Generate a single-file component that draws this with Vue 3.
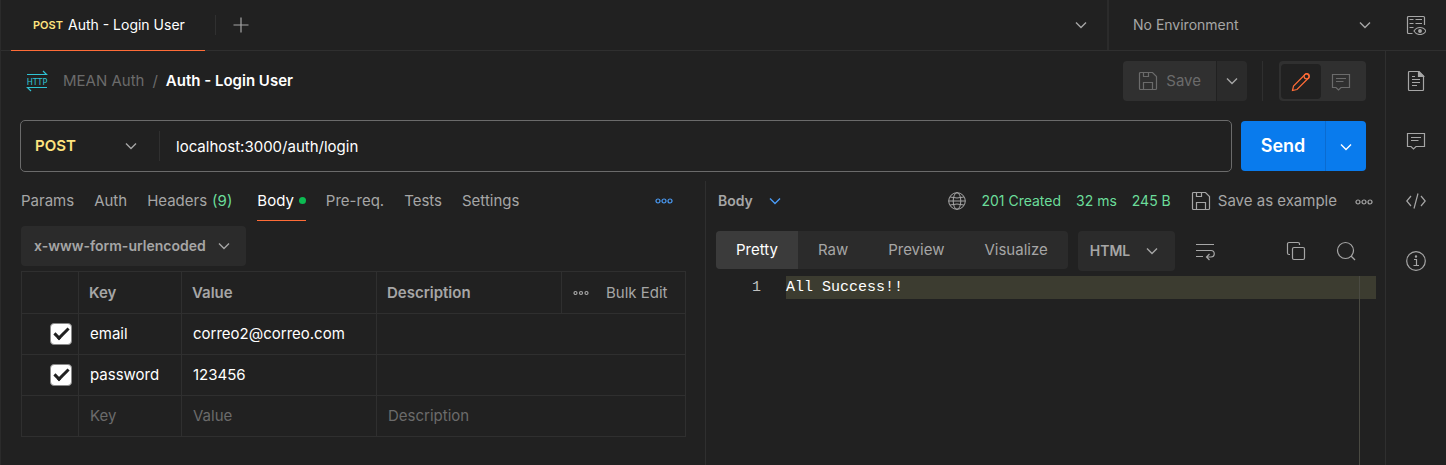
<script setup>
import { ref } from 'vue'

const requestTabs = [
  { label: 'Params' },
  { label: 'Auth' },
  { label: 'Headers', count: '(9)' },
  { label: 'Body', active: true },
  { label: 'Pre-req.' },
  { label: 'Tests' },
  { label: 'Settings' },
]
const views = ['Pretty', 'Raw', 'Preview', 'Visualize']
const activeView = ref('Pretty')
const url = ref('localhost:3000/auth/login')
const rows = ref([
  { key: 'email', value: 'correo2@correo.com', on: true },
  { key: 'password', value: '123456', on: true },
])
</script>

<template>
  <div class="app">
    <header class="topbar">
      <button class="tab" type="button">
        <span class="tab-method">POST</span>
        <span>Auth - Login User</span>
      </button>
      <span class="tab-divider"></span>
      <button class="icon-btn" type="button" aria-label="New tab">
        <svg width="20" height="20" viewBox="0 0 20 20" stroke="#8a8a8a" stroke-width="1.5"><path d="M10 2.5v15M2.5 10h15" /></svg>
      </button>
      <button class="icon-btn tabs-menu" type="button" aria-label="List tabs">
        <svg class="chev" viewBox="0 0 12 8"><path d="M1 1.5l5 5 5-5" /></svg>
      </button>
      <div class="picker env">
        <select aria-label="Environment"><option>No Environment</option></select>
        <svg class="chev" viewBox="0 0 12 8"><path d="M1 1.5l5 5 5-5" /></svg>
      </div>
      <button class="icon-btn side-cell" type="button" aria-label="Environment quick look">
        <svg width="20" height="20" viewBox="0 0 20 20">
          <path d="M6.500 18.500H2.500a1 1 0 0 1-1-1v-15a1 1 0 0 1 1-1h15a1 1 0 0 1 1 1V10" />
          <path d="M3.500 4.500h4M9.500 4.500h6.500M3.500 8.500h4M9.500 8.500h6.500M3.500 12.500h4" />
          <path d="M8 16c1.500-2.500 3.500-3.500 6-3.500s4.500 1 6 3.500c-1.500 2.500-3.500 3.500-6 3.500S9.500 18.500 8 16z" />
          <circle cx="14" cy="16" r="1.300" fill="#a6a6a6" />
        </svg>
      </button>
    </header>

    <div class="body">
      <main class="main">
        <div class="crumbs">
          <svg class="http" width="22" height="22" viewBox="0 0 22 22">
            <path d="M1 4.500h19.500L17 1M21 17.500H1.500L5 21" />
            <text x="11" y="14.500" text-anchor="middle">HTTP</text>
          </svg>
          <a class="crumb" href="#">MEAN Auth</a>
          <span class="slash">/</span>
          <h1>Auth - Login User</h1>
          <div class="save-group">
            <button class="save" type="button" disabled>
              <svg width="20" height="20" viewBox="0 0 20 20">
                <path d="M2.500 1.500h12l4 4v12a1 1 0 0 1-1 1h-15a1 1 0 0 1-1-1v-15a1 1 0 0 1 1-1zM5.500 18.500v-7h9v7M5.500 1.500v4h5v-4" />
              </svg>
              Save
            </button>
            <button class="save-more" type="button" aria-label="Save options">
              <svg class="chev" viewBox="0 0 12 8"><path d="M1 1.500l5 5 5-5" /></svg>
            </button>
          </div>
          <span class="row-divider"></span>
          <div class="modes">
            <button class="mode active" type="button" aria-label="Edit">
              <svg width="20" height="20" viewBox="0 0 20 20">
                <path d="M1.500 18.500l1-4.500L14 2.500a2.500 2.500 0 0 1 3.500 3.500L6 17.500z" />
                <circle cx="15.700" cy="4.300" r="2.600" />
              </svg>
            </button>
            <button class="mode" type="button" aria-label="Comments">
              <svg width="20" height="20" viewBox="0 0 20 20">
                <path d="M1.500 2.500h17v13H10l-2.500 2.500L5 15.500H1.500zM5 6.500h10M5 9.500h7.500" />
              </svg>
            </button>
          </div>
        </div>

        <form class="url-row" @submit.prevent>
          <div class="url-box">
            <div class="picker method">
              <select aria-label="Method"><option>POST</option></select>
              <svg class="chev" viewBox="0 0 12 8"><path d="M1 1.500l5 5 5-5" /></svg>
            </div>
            <input v-model="url" type="text" aria-label="Request URL" />
          </div>
          <div class="send-group">
            <button class="send" type="submit">Send</button>
            <button class="send-more" type="button" aria-label="Send options">
              <svg class="chev" viewBox="0 0 12 8"><path d="M1 1.500l5 5 5-5" /></svg>
            </button>
          </div>
        </form>

        <div class="panes">
          <section class="request">
            <nav class="req-tabs">
              <button v-for="t in requestTabs" :key="t.label" type="button" :class="{ active: t.active }">
                {{ t.label }}<span v-if="t.count" class="green">{{ t.count }}</span><i v-if="t.active" class="dot"></i>
              </button>
              <button class="more blue" type="button" aria-label="More">
                <svg width="20" height="8" viewBox="0 0 20 8"><circle cx="4" cy="4" r="2" /><circle cx="10" cy="4" r="2" /><circle cx="16" cy="4" r="2" /></svg>
              </button>
            </nav>
            <div class="picker fill encoding">
              <select aria-label="Body type"><option>x-www-form-urlencoded</option></select>
              <svg class="chev" viewBox="0 0 12 8"><path d="M1 1.500l5 5 5-5" /></svg>
            </div>
            <table>
              <colgroup>
                <col class="c-check" /><col class="c-key" /><col class="c-value" /><col /><col class="c-bulk" />
              </colgroup>
              <thead>
                <tr>
                  <th></th>
                  <th>Key</th>
                  <th>Value</th>
                  <th>Description</th>
                  <th>
                    <div class="bulk">
                      <button type="button" aria-label="Columns">
                        <svg width="18" height="8" viewBox="0 0 18 8"><circle cx="3.500" cy="4" r="1.500" /><circle cx="9" cy="4" r="1.500" /><circle cx="14.500" cy="4" r="1.500" /></svg>
                      </button>
                      <button type="button">Bulk Edit</button>
                    </div>
                  </th>
                </tr>
              </thead>
              <tbody>
                <tr v-for="row in rows" :key="row.key">
                  <td class="check"><input v-model="row.on" type="checkbox" :aria-label="row.key" /></td>
                  <td>{{ row.key }}</td>
                  <td>{{ row.value }}</td>
                  <td colspan="2"></td>
                </tr>
                <tr>
                  <td></td>
                  <td><input type="text" placeholder="Key" aria-label="Key" /></td>
                  <td><input type="text" placeholder="Value" aria-label="Value" /></td>
                  <td colspan="2"><input type="text" placeholder="Description" aria-label="Description" /></td>
                </tr>
              </tbody>
            </table>
          </section>

          <section class="response">
            <div class="status">
              <div class="picker part">
                <select aria-label="Response part"><option>Body</option></select>
                <svg class="chev" viewBox="0 0 12 8"><path d="M1 1.500l5 5 5-5" /></svg>
              </div>
              <svg class="globe" width="18" height="18" viewBox="0 0 18 18">
                <circle cx="9" cy="9" r="8.300" /><ellipse cx="9" cy="9" rx="3.800" ry="8.300" /><path d="M2 5q7 2 14 0M2 13q7-2 14 0M.7 9h16.600" />
              </svg>
              <span class="green">201 Created</span>
              <span class="green">32 ms</span>
              <span class="green">245 B</span>
              <button class="example" type="button">
                <svg width="20" height="20" viewBox="0 0 20 20">
                  <path d="M2.500 1.500h12l4 4v12a1 1 0 0 1-1 1h-15a1 1 0 0 1-1-1v-15a1 1 0 0 1 1-1zM5.500 18.500v-7h9v7M5.500 1.500v4h5v-4" />
                </svg>
                Save as example
              </button>
              <button class="more" type="button" aria-label="More response actions">
                <svg width="20" height="8" viewBox="0 0 20 8"><circle cx="4" cy="4" r="2" /><circle cx="10" cy="4" r="2" /><circle cx="16" cy="4" r="2" /></svg>
              </button>
            </div>
            <div class="tools">
              <div class="views">
                <button v-for="v in views" :key="v" type="button" :class="{ active: v === activeView }" @click="activeView = v">{{ v }}</button>
              </div>
              <div class="picker fill lang">
                <select aria-label="Language"><option>HTML</option></select>
                <svg class="chev" viewBox="0 0 12 8"><path d="M1 1.500l5 5 5-5" /></svg>
              </div>
              <button class="icon-btn" type="button" aria-label="Wrap lines">
                <svg width="20" height="20" viewBox="0 0 20 20">
                  <path d="M1 3.500h18M1 9.500h15a2.900 2.900 0 0 1 0 6.500h-4.500M14.500 13l-3 3 3 3M1 15.500h7" />
                </svg>
              </button>
              <button class="icon-btn copy" type="button" aria-label="Copy">
                <svg width="20" height="20" viewBox="0 0 20 20">
                  <rect x="6.500" y="6.500" width="12" height="12" rx="1.500" />
                  <path d="M4 13.500H3A1.500 1.500 0 0 1 1.500 12V3A1.500 1.500 0 0 1 3 1.500h9A1.500 1.500 0 0 1 13.500 3v1" />
                </svg>
              </button>
              <button class="icon-btn" type="button" aria-label="Search">
                <svg width="20" height="20" viewBox="0 0 20 20"><circle cx="9.500" cy="9.500" r="8" /><path d="M15 15l4 4" /></svg>
              </button>
            </div>
            <div class="code">
              <span class="line-no">1</span>
              <code>All Success!!</code>
              <span class="ruler"></span>
            </div>
          </section>
        </div>
      </main>

      <aside class="side">
        <button class="icon-btn" type="button" aria-label="Documentation">
          <svg width="20" height="20" viewBox="0 0 20 20">
            <path d="M3.500.5h9.500l4.500 4.500v13.500a1 1 0 0 1-1 1h-13a1 1 0 0 1-1-1v-17a1 1 0 0 1 1-1zM6 5.500h3M6 8.500h8M6 11.500h8M6 14.500h5" />
            <path d="M12.500.5v5h5z" fill="#a6a6a6" />
          </svg>
        </button>
        <button class="icon-btn" type="button" aria-label="Comments">
          <svg width="20" height="20" viewBox="0 0 20 20">
            <path d="M1.500 2.500h17v13H10l-2.500 2.500L5 15.500H1.500zM5 6.500h10M5 9.500h7.500" />
          </svg>
        </button>
        <button class="icon-btn" type="button" aria-label="Code">
          <svg width="20" height="20" viewBox="0 0 20 20"><path d="M5 5L.8 10 5 15M15 5l4.200 5-4.200 5M12 2.500L8 17.500" /></svg>
        </button>
        <button class="icon-btn" type="button" aria-label="Info">
          <svg width="20" height="20" viewBox="0 0 20 20"><circle cx="10" cy="10" r="9.300" /><path d="M8 8.500h2.500v6M7.500 14.500h5.500" /><circle cx="10" cy="5.500" r=".6" /></svg>
        </button>
      </aside>
    </div>
  </div>
</template>

<style>
body {
  margin: 0;
  background: #212121;
}
</style>

<style scoped>
.app {
  display: flex;
  flex-direction: column;
  min-height: 100vh;
  box-sizing: border-box;
  border-left: 1px solid #2b2b2b;
  background: #212121;
  color: #fff;
  font: 15px/20px Inter, sans-serif;
}
button,
select,
input {
  box-sizing: border-box;
  margin: 0;
  padding: 0;
  border: 0;
  background: none;
  color: inherit;
  font: inherit;
  white-space: nowrap;
}
select {
  appearance: none;
  width: 100%;
  outline: none;
}
svg {
  flex: none;
  fill: none;
  stroke: #a6a6a6;
  stroke-width: 1.2;
}
.chev {
  width: 12px;
  height: 8px;
  stroke-width: 1.4;
}
.icon-btn {
  display: flex;
  align-items: center;
  justify-content: center;
}
.picker {
  display: grid;
  align-items: center;
}
.picker select,
.picker .chev {
  grid-area: 1 / 1;
}
.picker select {
  height: 100%;
}
.picker .chev {
  justify-self: end;
  pointer-events: none;
}
.fill {
  height: 40px;
  border-radius: 4px;
  background: #2b2b2b;
  color: #a6a6a6;
  font-size: 14px;
  font-weight: 600;
}
.green {
  color: #6bdd9a;
}

.topbar {
  display: flex;
  align-items: center;
  height: 51px;
  box-sizing: border-box;
  border-bottom: 1px solid #2f2f2f;
}
.tab {
  display: flex;
  align-items: center;
  gap: 5px;
  height: 51px;
  margin: 0 10px -1px;
  padding: 0 20px 0 22px;
  border-bottom: 1px solid #ff6c37;
  font-size: 14px;
}
.tab-method {
  color: #ffe47e;
  font-size: 11px;
  font-weight: 600;
}
.tab-divider {
  width: 1px;
  height: 20px;
  margin-right: 15px;
  background: #303030;
}
.tabs-menu {
  margin-left: auto;
  padding: 0 20px;
}
.env {
  width: 279px;
  height: 50px;
  box-sizing: border-box;
  padding: 0 15px 0 24px;
  border-left: 2px solid #2b2b2b;
  color: #a6a6a6;
  font-size: 14px;
}
.side-cell {
  width: 60px;
}

.body {
  display: flex;
  flex: 1;
}
.main {
  display: flex;
  flex: 1;
  flex-direction: column;
  min-width: 0;
}
.side {
  display: flex;
  flex-direction: column;
  width: 60px;
  border-left: 1px solid #2f2f2f;
}
.side .icon-btn {
  height: 60px;
}

.crumbs {
  display: flex;
  align-items: center;
  height: 60px;
  padding: 0 19px 0 25px;
}
.http {
  margin-right: 15px;
  stroke: #2fc3d4;
}
.http text {
  fill: #2fc3d4;
  stroke: none;
  font: 9px "DejaVu Sans Condensed", "DejaVu Sans", sans-serif;
}
.crumb {
  color: #6b6b6b;
  text-decoration: none;
}
.slash {
  margin: 0 8px;
  color: #6b6b6b;
}
h1 {
  margin: 0;
  font-size: 15px;
  font-weight: 600;
}
.save-group {
  display: flex;
  gap: 1px;
  margin-left: auto;
}
.save,
.save-more {
  display: flex;
  align-items: center;
  height: 40px;
  background: #2b2b2b;
}
.save {
  gap: 8px;
  padding: 0 15px;
  border-radius: 4px 0 0 4px;
  background: #303030;
  color: #6b6b6b;
}
.save svg {
  stroke: #6b6b6b;
}
.save-more {
  padding: 0 9px;
  border-radius: 0 4px 4px 0;
}
.row-divider {
  width: 1px;
  height: 40px;
  margin: 0 16px 0 15px;
  background: #2f2f2f;
}
.modes {
  display: flex;
  padding: 3px 5px 2px 2px;
  border-radius: 4px;
  background: #303030;
}
.mode {
  display: flex;
  align-items: center;
  justify-content: center;
  width: 40px;
  height: 35px;
  border-radius: 4px;
}
.mode svg {
  stroke: #6b6b6b;
}
.mode.active {
  background: #212121;
}
.mode.active svg {
  stroke: #ff6c37;
}

.url-row {
  display: flex;
  align-items: center;
  gap: 9px;
  padding: 9px 19px;
}
.url-box {
  display: flex;
  align-items: center;
  flex: 1;
  height: 50px;
  border: 1px solid #6b6b6b;
  border-radius: 5px;
}
.method {
  width: 139px;
  height: 30px;
  box-sizing: border-box;
  padding: 0 22px 0 14px;
  border-right: 1px solid #303030;
  color: #ffe47e;
  font-weight: 600;
}
.url-box input {
  flex: 1;
  height: 100%;
  padding: 0 16px;
  outline: none;
}
.send-group {
  display: flex;
  height: 50px;
  border-radius: 4px;
  background: #097bed;
}
.send {
  width: 84px;
  font-size: 18px;
  font-weight: 600;
}
.send-more {
  width: 41px;
  border-left: 1px solid #0a6bd0;
}
.send-more .chev {
  stroke: #fff;
}

.panes {
  display: grid;
  flex: 1;
  grid-template-columns: 704fr 680fr;
}
.request {
  min-width: 0;
  padding: 0 19px 0 20px;
}
.req-tabs {
  display: flex;
  gap: 20px;
  height: 40px;
  color: #a6a6a6;
}
.req-tabs button {
  display: flex;
  align-items: center;
  gap: 5px;
  border-bottom: 1px solid transparent;
}
.req-tabs .active {
  margin-left: 5px;
  border-color: #ff6c37;
  color: #fff;
}
.dot {
  width: 7px;
  height: 7px;
  border-radius: 50%;
  background: #0cbb52;
}
.req-tabs .more {
  margin-left: auto;
  margin-right: 12px;
}
.blue svg {
  stroke: #4a9bf5;
}
.encoding {
  width: 225px;
  margin: 5px 0;
  padding: 0 16px 0 13px;
  box-sizing: border-box;
}
table {
  width: 100%;
  border-collapse: collapse;
  table-layout: fixed;
}
.c-check { width: 57px; }
.c-key { width: 103px; }
.c-value { width: 195px; }
.c-bulk { width: 124px; }
th,
td {
  height: 40px;
  padding: 0 11px;
  border: 1px solid #2f2f2f;
  text-align: left;
}
th {
  height: 41px;
  padding: 0 10px;
  color: #a6a6a6;
  font-weight: 600;
}
td input[type='text'] {
  width: 100%;
}
td input::placeholder {
  color: #6b6b6b;
  opacity: 1;
}
.check {
  padding: 0 6px;
  text-align: right;
}
.check input {
  appearance: none;
  display: inline-grid;
  place-items: center;
  width: 22px;
  height: 22px;
  border: 1px solid #8a8a8a;
  border-radius: 4px;
  vertical-align: middle;
}
.check input:checked {
  background: #fff;
}
.check input:checked::before {
  content: '';
  width: 12px;
  height: 5px;
  margin-bottom: 4px;
  border: solid #212121;
  border-width: 0 0 3px 3px;
  rotate: -45deg;
}
.bulk {
  display: flex;
  align-items: center;
  gap: 16px;
  font-weight: 400;
}
.bulk button {
  display: flex;
}

.response {
  display: flex;
  flex-direction: column;
  min-width: 0;
  border-left: 1px solid #2f2f2f;
}
.status {
  display: flex;
  align-items: center;
  height: 40px;
  gap: 15px;
  padding: 0 11px 0 12px;
  color: #a6a6a6;
  font-size: 14px;
}
.part {
  width: 63px;
  font-weight: 600;
}
.part .chev {
  stroke: #4a9bf5;
}
.globe {
  margin-left: auto;
  stroke-width: 1;
}
.example {
  display: flex;
  align-items: center;
  gap: 7px;
  margin: 0 2px 0 5px;
  font-size: 15px;
}
.tools {
  display: flex;
  height: 40px;
  gap: 10px;
  padding: 10px 19px 5px 10px;
}
.views {
  display: flex;
  height: 38px;
  border-radius: 4px;
  background: #2b2b2b;
  color: #a6a6a6;
}
.views button {
  padding: 0 20px;
}
.views .active {
  border-radius: 4px 0 0 4px;
  background: #3b3b3b;
  color: #fff;
}
.lang {
  width: 97px;
  box-sizing: border-box;
  padding: 0 17px 0 12px;
}
.tools .icon-btn {
  width: 40px;
}
.tools .copy {
  margin-left: auto;
}
.code {
  display: grid;
  flex: 1;
  grid-template-columns: 55px 1fr;
  grid-template-rows: 23px 1fr;
  column-gap: 25px;
  padding-right: 9px;
  font: 15px/23px "Liberation Mono", monospace;
}
.line-no {
  color: #c0c0c0;
  text-align: right;
}
code {
  grid-area: 1 / 2;
  background: #3c3c30;
  font: inherit;
}
.ruler {
  grid-area: 1 / 2 / 3 / 3;
  justify-self: end;
  width: 16px;
  border-left: 1px solid #4a4a42;
}
</style>
